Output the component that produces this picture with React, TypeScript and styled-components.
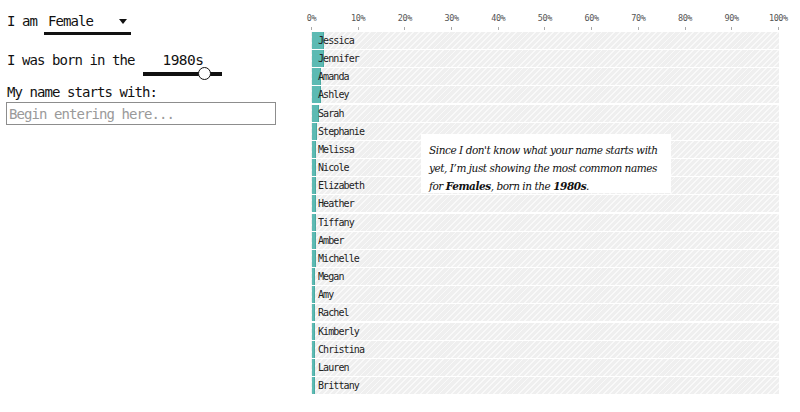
import styled, { createGlobalStyle } from 'styled-components'

const mono = '"DejaVu Sans Mono", "Liberation Mono", monospace'
const serif = '"DejaVu Serif", "Liberation Serif", serif'
const barColor = '#5dbab3'
const chartWidth = 468

const GlobalStyle = createGlobalStyle`
  html, body {
    margin: 0;
    padding: 0;
    background: #fff;
  }
  body {
    font-family: ${mono};
    color: #111;
  }
`

const names: { name: string; px: number }[] = [
  { name: 'Jessica', px: 12 },
  { name: 'Jennifer', px: 11 },
  { name: 'Amanda', px: 8.5 },
  { name: 'Ashley', px: 8.5 },
  { name: 'Sarah', px: 6.5 },
  { name: 'Stephanie', px: 4.2 },
  { name: 'Melissa', px: 4 },
  { name: 'Nicole', px: 4 },
  { name: 'Elizabeth', px: 4 },
  { name: 'Heather', px: 3.5 },
  { name: 'Tiffany', px: 3.5 },
  { name: 'Amber', px: 3.5 },
  { name: 'Michelle', px: 3.5 },
  { name: 'Megan', px: 3 },
  { name: 'Amy', px: 3 },
  { name: 'Rachel', px: 3 },
  { name: 'Kimberly', px: 3 },
  { name: 'Christina', px: 3 },
  { name: 'Lauren', px: 3 },
  { name: 'Brittany', px: 3 },
]

const ticks = [0, 10, 20, 30, 40, 50, 60, 70, 80, 90, 100]

const Page = styled.div`
  display: flex;
  flex-direction: row;
  width: 800px;
  height: 412px;
`

const Controls = styled.div`
  width: 304px;
  padding: 13px 0 0 7px;
  display: flex;
  flex-direction: column;
  font-size: 14px;
  letter-spacing: -0.93px;
`

const Line = styled.div<{ mt?: number }>`
  display: flex;
  flex-direction: row;
  align-items: flex-start;
  margin-top: ${(p) => p.mt || 0}px;
  line-height: 16px;
  white-space: pre;
`

const SelectBox = styled.div`
  position: relative;
  margin-left: 7px;
  width: 87px;
  height: 19px;
  border-bottom: 3.5px solid #111;
`

const Select = styled.select`
  appearance: none;
  border: none;
  background: transparent;
  font-family: ${mono};
  font-size: 14px;
  letter-spacing: -0.93px;
  color: #111;
  padding: 0 0 0 4px;
  margin: 0;
  width: 100%;
  height: 16px;
  line-height: 16px;
  outline: none;
`

const Caret = styled.span`
  position: absolute;
  right: 4px;
  top: 6px;
  width: 0;
  height: 0;
  border-left: 4.5px solid transparent;
  border-right: 4.5px solid transparent;
  border-top: 5px solid #111;
  pointer-events: none;
`

const SliderBlock = styled.div`
  margin-left: 9px;
  width: 79px;
  display: flex;
  flex-direction: column;
  align-items: center;
`

const Decade = styled.div`
  font-size: 14.5px;
  letter-spacing: -0.5px;
  line-height: 16px;
`

const Range = styled.input`
  appearance: none;
  -webkit-appearance: none;
  width: 79px;
  height: 13px;
  margin: -1px 0 0;
  background: transparent;
  &::-webkit-slider-runnable-track {
    height: 4px;
    background: #111;
  }
  &::-webkit-slider-thumb {
    -webkit-appearance: none;
    width: 13px;
    height: 13px;
    margin-top: -4.5px;
    border-radius: 50%;
    background: #fff;
    border: 1.5px solid #111;
    box-sizing: border-box;
  }
`

const Label = styled.div`
  margin-top: 4px;
  line-height: 16px;
`

const TextInput = styled.input`
  margin: 2px 0 0 -1px;
  width: 270px;
  height: 23px;
  box-sizing: border-box;
  border: 1px solid #8d8d8d;
  padding: 0 2px;
  font-family: ${mono};
  font-size: 14px;
  letter-spacing: -0.93px;
  color: #111;
  outline: none;
  &::placeholder {
    color: #9a9a9a;
  }
`

const Chart = styled.div`
  width: ${chartWidth}px;
  display: flex;
  flex-direction: column;
`

const Axis = styled.div`
  margin-top: 13px;
  height: 18px;
  margin-bottom: 1px;
  display: flex;
  flex-direction: row;
  justify-content: space-between;
`

const Tick = styled.div`
  position: relative;
  width: 1px;
  height: 18px;
  display: flex;
  flex-direction: column;
  align-items: center;
`

const TickLabel = styled.div`
  font-size: 8.5px;
  letter-spacing: -0.4px;
  line-height: 10px;
  color: #555;
  white-space: nowrap;
`

const TickMark = styled.div`
  margin-top: 4px;
  width: 1px;
  height: 3px;
  background: #aaa;
`

const Rows = styled.div`
  position: relative;
  display: flex;
  flex-direction: column;
  gap: 1.17px;
`

const Row = styled.div`
  position: relative;
  height: 17px;
  display: flex;
  align-items: center;
  background: repeating-linear-gradient(
    135deg,
    #efefef 0,
    #efefef 3px,
    #f9f9f9 3px,
    #f9f9f9 4.3px
  );
`

const Bar = styled.div`
  position: absolute;
  left: 0.5px;
  top: 0;
  bottom: 0;
  background: ${barColor};
  border-right: 1px solid #4aa9a2;
`

const Name = styled.span`
  position: relative;
  margin-left: 7px;
  font-size: 10px;
  letter-spacing: -0.9px;
  color: #222;
`

const Note = styled.div`
  position: absolute;
  left: 110px;
  top: 102px;
  width: 250px;
  height: 59px;
  box-sizing: border-box;
  padding: 7px 0 0 8px;
  background: #fff;
  font-family: ${serif};
  font-style: italic;
  font-size: 10.5px;
  letter-spacing: -0.45px;
  line-height: 18px;
  color: #111;
`

const NoteLine = styled.div`
  white-space: nowrap;
`

export default function App() {
  return (
    <Page>
      <GlobalStyle />
      <Controls>
        <Line>
          I am
          <SelectBox>
            <Select defaultValue="Female">
              <option>Female</option>
              <option>Male</option>
            </Select>
            <Caret />
          </SelectBox>
        </Line>
        <Line mt={17}>
          I was born in the
          <SliderBlock>
            <Decade>1980s</Decade>
            <Range
              type="range"
              min={1880}
              max={2000}
              step={10}
              defaultValue={1980}
            />
          </SliderBlock>
        </Line>
        <Label>My name starts with:</Label>
        <TextInput placeholder="Begin entering here..." />
      </Controls>
      <Chart>
        <Axis>
          {ticks.map((t) => (
            <Tick key={t}>
              <TickLabel>{t}%</TickLabel>
              <TickMark />
            </Tick>
          ))}
        </Axis>
        <Rows>
          {names.map((n) => (
            <Row key={n.name}>
              <Bar style={{ width: `${(n.px / chartWidth) * 100}%` }} />
              <Name>{n.name}</Name>
            </Row>
          ))}
          <Note>
            <NoteLine>Since I don't know what your name starts with</NoteLine>
            <NoteLine>yet, I’m just showing the most common names</NoteLine>
            <NoteLine>
              for <b>Females</b>, born in the <b>1980s</b>.
            </NoteLine>
          </Note>
        </Rows>
      </Chart>
    </Page>
  )
}
